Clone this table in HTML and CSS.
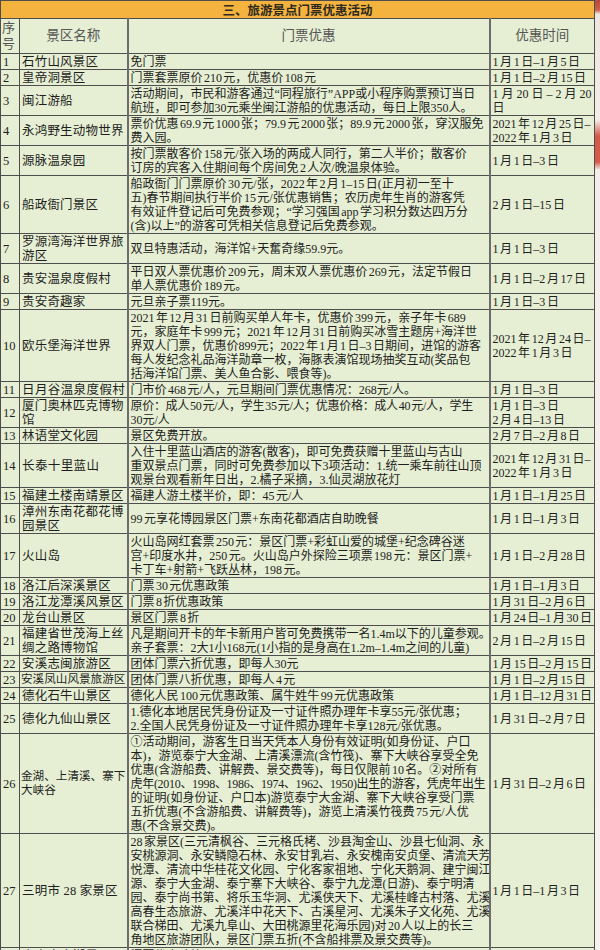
FILE: index.html
```html
<!DOCTYPE html>
<html lang="zh-CN">
<head>
<meta charset="utf-8">
<title>三、旅游景点门票优惠活动</title>
<link rel="stylesheet" href="styles.css">
</head>
<body>
<div class="page">
<table class="tbl">
<colgroup><col class="c-no"><col class="c-name"><col class="c-desc"><col class="c-time"></colgroup>
<thead>
<tr><th colspan="4" class="title">三、旅游景点门票优惠活动</th></tr>
<tr class="head"><th class="no">序<br>号</th><th>景区名称</th><th>门票优惠</th><th>优惠时间</th></tr>
</thead>
<tbody>
<tr><td class="no">1</td><td class="name">石竹山风景区</td><td class="desc">免门票</td><td class="time">1 月 1 日–1 月 5 日</td></tr>
<tr><td class="no">2</td><td class="name">皇帝洞景区</td><td class="desc">门票套票原价 210 元，优惠价 108 元</td><td class="time">1 月 1 日–2 月 15 日</td></tr>
<tr><td class="no">3</td><td class="name">闽江游船</td><td class="desc">活动期间，市民和游客通过“同程旅行”APP或小程序购票预订当日<br>航班，即可参加30元乘坐闽江游船的优惠活动，每日上限350人。</td><td class="time"><span class="wd">1 月 20 日 – 2 月 20</span><br>日</td></tr>
<tr><td class="no">4</td><td class="name">永鸿野生动物世界</td><td class="desc">票价优惠 69.9 元 1000 张；79.9 元 2000 张；89.9 元 2000 张，穿汉服免<br>费入园。</td><td class="time">2021 年 12 月 25 日–<br>2022 年 1 月 3 日</td></tr>
<tr><td class="no">5</td><td class="name">源脉温泉园</td><td class="desc">按门票散客价 158 元/张入场的两成人同行，第二人半价；散客价<br>订房的宾客入住期间每个房间免 2 人次/晚温泉体验。</td><td class="time">1 月 1 日–3 日</td></tr>
<tr><td class="no">6</td><td class="name">船政衙门景区</td><td class="desc">船政衙门门票原价 30 元/张，2022 年 2 月 1–15 日(正月初一至十<br>五)春节期间执行半价 15 元/张优惠销售；农历虎年生肖的游客凭<br>有效证件登记后可免费参观；“学习强国 app 学习积分数达四万分<br>(含)以上”的游客可凭相关信息登记后免费参观。</td><td class="time">2 月 1 日–15 日</td></tr>
<tr><td class="no">7</td><td class="name">罗源湾海洋世界旅<br>游区</td><td class="desc">双旦特惠活动，海洋馆+天奮奇缘59.9元。</td><td class="time">1 月 1 日–3 日</td></tr>
<tr><td class="no">8</td><td class="name">贵安温泉度假村</td><td class="desc">平日双人票优惠价 209 元，周末双人票优惠价 269 元，法定节假日<br>单人票优惠价 189 元。</td><td class="time">1 月 1 日–2 月 17 日</td></tr>
<tr><td class="no">9</td><td class="name">贵安奇趣家</td><td class="desc">元旦亲子票119元。</td><td class="time">1 月 1 日–3 日</td></tr>
<tr><td class="no">10</td><td class="name">欧乐堡海洋世界</td><td class="desc">2021 年 12 月 31 日前购买单人年卡，优惠价 399 元，亲子年卡 689<br>元，家庭年卡 999 元；2021 年 12 月 31 日前购买冰雪主题房+海洋世<br>界双人门票，优惠价899元；2022 年 1 月 1 日–3 日期间，进馆的游客<br>每人发纪念礼品海洋勋章一枚，海豚表演馆现场抽奖互动(奖品包<br>括海洋馆门票、美人鱼合影、喂食等)。</td><td class="time">2021 年 12 月 24 日–<br>2022 年 1 月 3 日</td></tr>
<tr><td class="no">11</td><td class="name wide">日月谷温泉度假村</td><td class="desc">门市价 468 元/人，元旦期间门票优惠情况：268元/人。</td><td class="time">1 月 1 日–3 日</td></tr>
<tr><td class="no">12</td><td class="name">厦门奥林匹克博物<br>馆</td><td class="desc"><span class="sq">原价：成人 50 元/人，学生 35 元/人；优惠价格：成人 40 元/人，学生</span><br>30元/人</td><td class="time">1 月 1 日–3 日<br>2 月 4 日–13 日</td></tr>
<tr><td class="no">13</td><td class="name">林语堂文化园</td><td class="desc">景区免费开放。</td><td class="time">2 月 7 日–2 月 8 日</td></tr>
<tr><td class="no">14</td><td class="name wide">长泰十里蓝山</td><td class="desc">入住十里蓝山酒店的游客(散客)，即可免费获赠十里蓝山与古山<br>重双景点门票，同时可免费参加以下3项活动：1.统一乘车前往山顶<br>观景台观看新年日出，2.橘子采摘，3.仙灵湖放花灯</td><td class="time">2021 年 12 月 31 日–<br>2022 年 1 月 3 日</td></tr>
<tr><td class="no">15</td><td class="name">福建土楼南靖景区</td><td class="desc">福建人游土楼半价，即：45 元/人</td><td class="time">1 月 1 日–1 月 25 日</td></tr>
<tr><td class="no">16</td><td class="name">漳州东南花都花博<br>园景区</td><td class="desc">99 元享花博园景区门票+东南花都酒店自助晚餐</td><td class="time">1 月 1 日–1 月 3 日</td></tr>
<tr><td class="no">17</td><td class="name">火山岛</td><td class="desc">火山岛网红套票 250 元：景区门票+彩虹山爱的城堡+纪念碑谷迷<br>宫+印度水井，250 元。火山岛户外探险三项票 198 元：景区门票+<br>卡丁车+射箭+飞跃丛林，198 元。</td><td class="time">1 月 1 日–2 月 28 日</td></tr>
<tr><td class="no">18</td><td class="name">洛江后深溪景区</td><td class="desc">门票 30 元优惠政策</td><td class="time">1 月 1 日–1 月 3 日</td></tr>
<tr><td class="no">19</td><td class="name">洛江龙潭溪风景区</td><td class="desc">门票 8 折优惠政策</td><td class="time">1 月 31 日–2 月 6 日</td></tr>
<tr><td class="no">20</td><td class="name">龙台山景区</td><td class="desc">景区门票 8 折</td><td class="time">1 月 24 日–1 月 30 日</td></tr>
<tr><td class="no">21</td><td class="name">福建省世茂海上丝<br>绸之路博物馆</td><td class="desc">凡是期间开卡的年卡新用户皆可免费携带一名1.4m以下的儿童参观。<br>亲子套票：2大1小168元(1小指的是身高在1.2m–1.4m之间的儿童)</td><td class="time">2 月 1 日–2 月 15 日</td></tr>
<tr><td class="no">22</td><td class="name">安溪志闽旅游区</td><td class="desc">团体门票六折优惠，即每人30元</td><td class="time">1 月 15 日–2 月 15 日</td></tr>
<tr><td class="no">23</td><td class="name tight">安溪凤山风景旅游区</td><td class="desc">团体门票八折优惠，即每人 4 元</td><td class="time">1 月 1 日–2 月 15 日</td></tr>
<tr><td class="no">24</td><td class="name">德化石牛山景区</td><td class="desc">德化人民 100 元优惠政策、属牛姓牛 99 元优惠政策</td><td class="time">1 月 1 日–12 月 31 日</td></tr>
<tr><td class="no">25</td><td class="name">德化九仙山景区</td><td class="desc">1.德化本地居民凭身份证及一寸证件照办理年卡享55元/张优惠；<br>2.全国人民凭身份证及一寸证件照办理年卡享128元/张优惠。</td><td class="time">1 月 31 日–2 月 7 日</td></tr>
<tr><td class="no">26</td><td class="name tight">金湖、上清溪、寨下<br>大峡谷</td><td class="desc">①活动期间，游客生日当天凭本人身份有效证明(如身份证、户口<br>本)，游览泰宁大金湖、上清溪漂流(含竹筏)、寨下大峡谷享受全免<br>优惠(含游船费、讲解费、景交费等)，每日仅限前 10 名。②对所有<br><span class="sq">虎年(2010、1998、1986、1974、1962、1950)出生的游客，凭虎年出生</span><br>的证明(如身份证、户口本)游览泰宁大金湖、寨下大峡谷享受门票<br>五折优惠(不含游船费、讲解费等)，游览上清溪竹筏费 75 元/人优<br>惠(不含景交费)。</td><td class="time">1 月 31 日–2 月 6 日</td></tr>
<tr><td class="no">27</td><td class="name">三明市 28 家景区</td><td class="desc">28 家景区(三元清枫谷、三元格氏栲、沙县淘金山、沙县七仙洞、永<br>安桃源洞、永安鳞隐石林、永安甘乳岩、永安槐南安贞堡、清流天芳<br>悦潭、清流中华桂花文化园、宁化客家祖地、宁化天鹅洞、建宁闽江<br>源、泰宁大金湖、泰宁寨下大峡谷、泰宁九龙潭(日游)、泰宁明清<br>园、泰宁尚书第、将乐玉华洞、尤溪侠天下、尤溪桂峰古村落、尤溪<br>高春生态旅游、尤溪洋中花天下、古溪星河、尤溪朱子文化苑、尤溪<br>联合梯田、尤溪九阜山、大田桃源里花海乐园)对 20 人以上的长三<br>角地区旅游团队，景区门票五折(不含船排票及景交费等)。</td><td class="time">1 月 1 日–1 月 3 日</td></tr>
<tr><td class="no">28</td><td class="name">泰宁大金湖景区</td><td class="desc">门票优惠政策</td><td class="time">1 月 1 日–1 月 3 日</td></tr>
</tbody>
</table>
<div class="edge"></div>
</div>
</body>
</html>
```
FILE: styles.css
```css
html, body {
  margin: 0;
  padding: 0;
  background: #ffffff;
}
body {
  width: 600px;
  height: 950px;
  overflow: hidden;
  font-family: "Liberation Serif", "Noto Sans CJK SC", serif;
  color: #1e1e1e;
}
.page {
  display: flex;
  align-items: flex-start;
}
.tbl {
  width: 594px;
  table-layout: fixed;
  border-collapse: collapse;
  background: #e6efd3;
  font-size: 12px;
  line-height: 14px;
}
.c-no { width: 19px; }
.c-name { width: 108px; }
.c-desc { width: 362px; }
.c-time { width: 105px; }
.tbl th, .tbl td {
  border: 1px solid #4e4e4e;
  padding: 1px 2px 0 2px;
  vertical-align: middle;
  white-space: nowrap;
  overflow: hidden;
}
.tbl td:nth-child(2), .tbl th:nth-child(2) {
  border-right: 2px solid #6c6c6c;
}
.tbl td:nth-child(3), .tbl th:nth-child(3) {
  border-right: 2px solid #6c6c6c;
}
.tbl th.title {
  background: #f4b33e;
  color: #2e2a20;
  font-family: "Noto Sans CJK SC", sans-serif;
  font-weight: bold;
  font-size: 12.5px;
  line-height: 17px;
  padding: 0;
  border-right: 1px solid #4e4e4e;
  text-align: center;
}
.head th {
  font-weight: normal;
  color: #555555;
  font-size: 13.5px;
  line-height: 16px;
  text-align: center;
  padding: 1px 1px 1px 1px;
}
.head th.no {
  text-align: left;
  font-size: 13px;
  padding-left: 1px;
}
td.no {
  padding-left: 2px;
  padding-right: 0;
  font-size: 12.5px;
}
td.name {
  font-size: 12.5px;
  letter-spacing: 0.2px;
}
td.name.wide {
  letter-spacing: 0.4px;
}
td.name.tight {
  font-size: 11.6px;
  letter-spacing: 0;
  padding-left: 1px;
}
td.desc {
  padding-left: 2px;
  word-spacing: -1.6px;
}
td.time {
  font-size: 12px;
  padding-left: 2px;
  word-spacing: -1.4px;
}
.wd {
  word-spacing: 0;
}
.sq {
  letter-spacing: -0.3px;
}
.edge {
  flex: 0 0 6px;
  height: 950px;
  background: linear-gradient(to bottom, #b8473a 0, #c9604c 10px, #efe5df 14px, #f3ece8 120px, #d4584a 136px, #d85b4a 162px, #f4eeea 170px, #f6f2ef 100%);
}
```
